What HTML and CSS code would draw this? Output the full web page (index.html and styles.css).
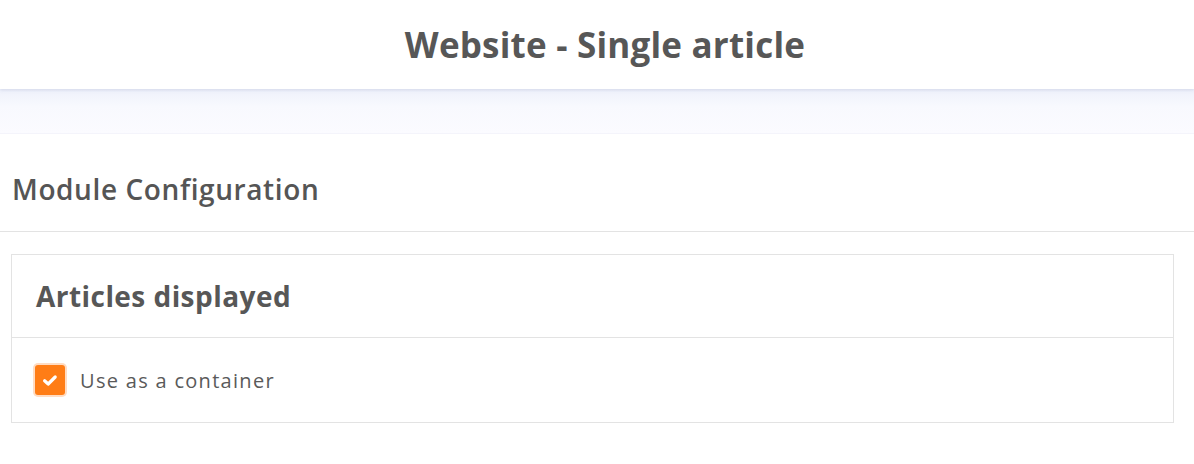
FILE: index.html
```html
<!DOCTYPE html>
<html>
<head>
<meta charset="utf-8">
<link rel="stylesheet" href="styles.css">
</head>
<body>
<header class="topbar">
  <h1 class="title">Website - Single article</h1>
</header>
<div class="band"></div>
<section class="module">
  <h2 class="module-title">Module Configuration</h2>
</section>
<div class="content">
  <div class="card">
    <div class="card-head">
      <h3 class="card-title">Articles displayed</h3>
    </div>
    <div class="card-body">
      <label class="check">
        <span class="box">
          <svg width="16" height="13" viewBox="0 0 16 13"><path d="M2.6 6.8 L6.2 10 L13.2 3" fill="none" stroke="#fff" stroke-width="3.2" stroke-linecap="round" stroke-linejoin="round"/></svg>
        </span>
        <span class="check-label">Use as a container</span>
      </label>
    </div>
  </div>
</div>
</body>
</html>
```
FILE: styles.css
```css
* { box-sizing: border-box; }
html, body { margin: 0; padding: 0; background: #fff; }
body { font-family: "Open Sans", "Lato", sans-serif; color: #525252; }
.topbar {
  height: 89px;
  background: #fff;
  display: flex;
  align-items: center;
  justify-content: center;
  padding-left: 16px;
  position: relative;
  z-index: 1;
  box-shadow: 0 1px 3px rgba(160,168,200,0.35);
}
.title {
  margin: 0;
  font-size: 35px;
  font-weight: 700;
  color: #575757;
  letter-spacing: 0.2px;
}
.band {
  height: 45px;
  background: linear-gradient(#eef1fb, #f8f9fe 40%, #fbfbff);
  border-bottom: 1px solid #f4f4fb;
}
.module {
  height: 98px;
  border-bottom: 1px solid #e3e3e3;
  padding: 12px 12px 0;
  display: flex;
  align-items: center;
}
.module-title {
  margin: 0;
  font-size: 28px;
  font-weight: 600;
  color: #555;
  letter-spacing: 0.6px;
}
.content { padding: 22px 20px 0 11px; }
.card { border: 1px solid #e3e3e3; }
.card-head {
  height: 83px;
  border-bottom: 1px solid #e3e3e3;
  display: flex;
  align-items: center;
  padding: 0 24px;
}
.card-title {
  margin: 0;
  font-size: 28px;
  font-weight: 700;
  color: #575757;
  letter-spacing: 0.45px;
}
.card-body {
  height: 84px;
  display: flex;
  align-items: center;
  padding: 0 23px;
}
.check { display: flex; align-items: center; gap: 15px; }
.box {
  width: 30px;
  height: 30px;
  border-radius: 3px;
  background: #ff7d16;
  box-shadow: 0 0 0 2px #ffdcc2;
  display: flex;
  align-items: center;
  justify-content: center;
}
.check-label { font-size: 20px; color: #5a5a5a; letter-spacing: 1.3px; }
```
